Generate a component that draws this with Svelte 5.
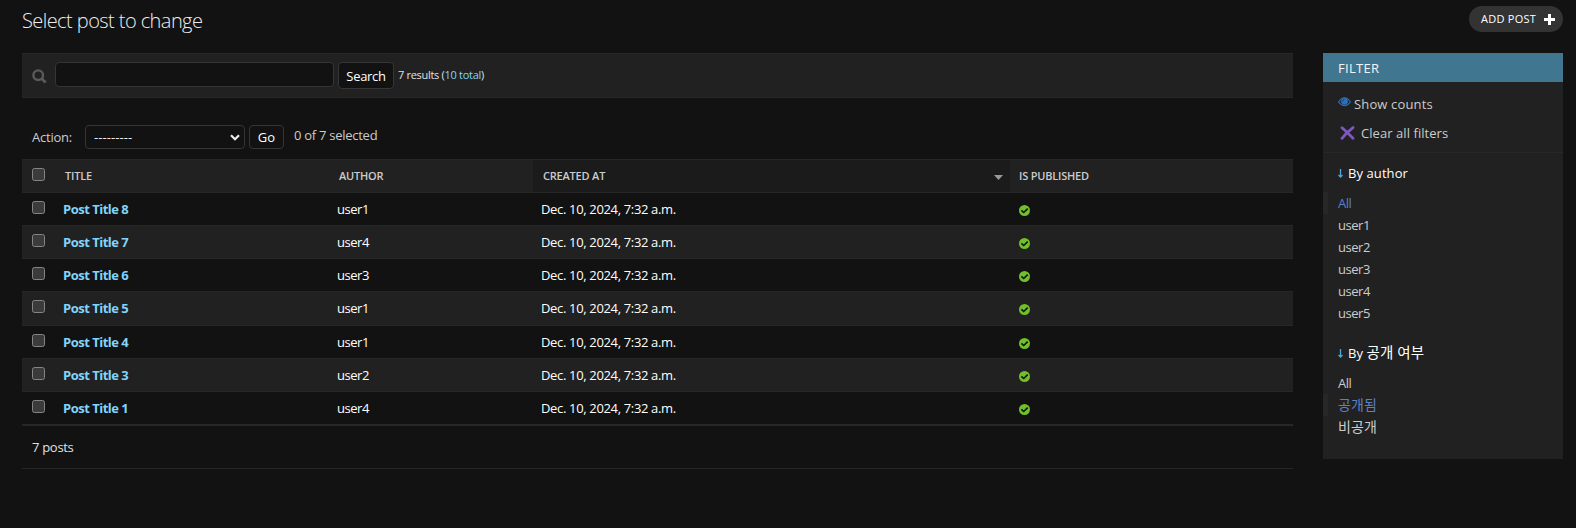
<script>
  const rows = [
    ['Post Title 8', 'user1'],
    ['Post Title 7', 'user4'],
    ['Post Title 6', 'user3'],
    ['Post Title 5', 'user1'],
    ['Post Title 4', 'user1'],
    ['Post Title 3', 'user2'],
    ['Post Title 1', 'user4'],
  ];
  const filters = [
    { name: 'author', items: ['All', 'user1', 'user2', 'user3', 'user4', 'user5'], selected: 0 },
    { name: '공개 여부', items: ['All', '공개됨', '비공개'], selected: 1 },
  ];
  const isKorean = (s) => /[가-힣]/.test(s);
</script>

<div class="page">
  <header>
    <h1>Select post to change</h1>
    <a class="add" href="#add"><span>Add post</span>
      <svg width="11" height="11" viewBox="0 0 11 11"><path d="M4 0h3v4h4v3H7v4H4V7H0V4h4z" fill="#fff" /></svg>
    </a>
  </header>
  <div class="content">
    <main>
      <div class="toolbar">
        <svg class="mag" width="15" height="15" viewBox="0 0 15 15"><circle cx="6.2" cy="6.2" r="4.800" fill="none" stroke="#5a5a5a" stroke-width="2.400" /><path d="M9.600 9.600l4 4" stroke="#5a5a5a" stroke-width="2.800" /></svg>
        <input class="q" type="text" aria-label="q" />
        <button class="search">Search</button>
        <span class="results">7 results (<a href="#all">10 total</a>)</span>
      </div>
      <div class="actions">
        <span class="label">Action:</span>
        <div class="select"><span>---------</span>
          <svg width="10" height="7" viewBox="0 0 10 7"><path d="M1 1.200l4 4 4-4" fill="none" stroke="#eee" stroke-width="2.200" /></svg>
        </div>
        <button class="go">Go</button>
        <span class="count">0 of 7 selected</span>
      </div>
      <div class="table">
        <div class="row head">
          <div class="check"><i></i></div>
          <div>Title</div>
          <div>Author</div>
          <div class="sorted">Created at
            <svg width="9" height="5" viewBox="0 0 9 5"><path d="M0 0h9L4.500 5z" fill="#999" /></svg>
          </div>
          <div class="published">Is published</div>
        </div>
        {#each rows as [title, author]}
          <div class="row body">
            <div class="check"><i></i></div>
            <div class="title"><a href="#post">{title}</a></div>
            <div class="user">{author}</div>
            <div class="date">Dec. 10, 2024, 7:32 a.m.</div>
            <div class="yes">
              <svg width="11" height="11" viewBox="0 0 11 11"><circle cx="5.500" cy="5.500" r="5.500" fill="#70bf2b" /><path d="M2.400 5.300l2.300 2.200 4-3.900" fill="none" stroke="#121212" stroke-width="1.600" /></svg>
            </div>
          </div>
        {/each}
      </div>
      <div class="paginator">7 posts</div>
    </main>
    <aside>
      <h2>Filter</h2>
      <div class="extra">
        <a class="show" href="#counts">
          <svg width="13" height="10" viewBox="0 0 13 10"><path d="M.5 5Q6.500-3.400 12.500 5Q6.500 12.400.5 5z" fill="none" stroke="#2b70bf" stroke-width="1.100" /><circle cx="6.500" cy="4.300" r="3.400" fill="#2b70bf" /><path d="M4.700 4.200a1.800 1.800 0 0 1 1.600-1.700" fill="none" stroke="#212121" stroke-width=".7" /></svg>
          <span>Show counts</span>
        </a>
        <a class="clear" href="#clear">
          <svg width="15" height="14" viewBox="0 0 15 14"><path d="M2 1.800Q7 6 13 12.300M13 1.600Q6.500 6.500 2 12.300" fill="none" stroke="#7e57c2" stroke-width="2.800" stroke-linecap="round" /></svg>
          <span>Clear all filters</span>
        </a>
      </div>
      {#each filters as f}
        <section>
          <h3>
            <svg width="5" height="9" viewBox="0 0 5 9"><path d="M2.500 0v8M.5 6l2 2 2-2" fill="none" stroke="#4ba8dc" stroke-width="1.300" /></svg>
            <span>By <span class:ko={isKorean(f.name)}>{f.name}</span></span>
          </h3>
          <ul>
            {#each f.items as item, i}
              <li class:selected={i === f.selected} class:ko={isKorean(item)}><a href="#filter">{item}</a></li>
            {/each}
          </ul>
        </section>
      {/each}
    </aside>
  </div>
</div>

<style>
  :global(body) { background: #121212; }
  * { box-sizing: border-box; }
  .page {
    height: 528px; overflow: hidden; padding: 0 13px 0 22px;
    background: #121212; color: #e0e0e0;
    font: 13px/18px 'Open Sans', 'Noto Sans', 'Noto Sans CJK KR', sans-serif;
  }
  a { color: inherit; text-decoration: none; }
  svg { display: block; flex: none; }
  h1, h2, h3, ul { margin: 0; padding: 0; font-weight: 400; list-style: none; }
  header { display: flex; justify-content: space-between; height: 53px; }
  h1 { font-size: 20px; line-height: 24px; font-weight: 300; padding-top: 9px; letter-spacing: -.57px; color: #eee; }
  .add {
    margin-top: 6px; width: 94px; height: 26px; border-radius: 13px; background: #333;
    display: flex; align-items: center; padding-left: 12px; gap: 7px; color: #fff;
    font-size: 11px; font-weight: 500; text-transform: uppercase; letter-spacing: .25px;
  }
  .add span { width: 56px; white-space: nowrap; }
  .content { display: flex; justify-content: space-between; align-items: flex-start; }
  main { width: 1271px; }
  .toolbar {
    height: 45px; background: #212121; border: solid #272727; border-width: 1px 0;
    display: flex; align-items: flex-start; padding: 8px 10px 0;
  }
  .mag { margin: 7px 8px 0 0; }
  .q { width: 279px; height: 25px; background: #121212; border: 1px solid #353535; border-radius: 4px; margin: 0 4px 0 0; }
  button {
    font: inherit; color: #fff; background: #121212; border: 1px solid #353535;
    border-radius: 4px; padding: 0; text-align: center;
  }
  .search { width: 56px; height: 27px; padding-top: 1px; letter-spacing: -.3px; }
  .results { margin: 4px 0 0 4px; font-size: 11px; letter-spacing: -.3px; }
  .results a { color: #81d4fa; }
  .actions { display: flex; align-items: flex-start; height: 61px; padding: 27px 10px 0; }
  .label { width: 53px; padding-top: 3px; letter-spacing: -.22px; color: #ccc; }
  .select {
    width: 160px; height: 24px; border: 1px solid #353535; border-radius: 4px; margin-right: 4px;
    display: flex; align-items: center; justify-content: space-between; padding: 0 4px 0 8px; color: #eee;
    letter-spacing: .08px;
  }
  .go { width: 35px; height: 24px; }
  .count { margin: 1px 0 0 10px; letter-spacing: -.27px; color: #ccc; }
  .row {
    display: grid; grid-template-columns: 33px 274px 204px 477px 1fr;
    border-bottom: 1px solid #272727;
  }
  .head {
    height: 34px; border-top: 1px solid #272727; background: #212121; color: #ccc;
    font-size: 11px; line-height: 32px; font-weight: 600; text-transform: uppercase; letter-spacing: -.2px;
  }
  .head > div { padding-left: 10px; }
  .head > .published { padding-left: 9px; }
  .sorted { background: #1b1b1b; display: flex; justify-content: space-between; align-items: center; padding-right: 7px; }
  .sorted svg { margin-top: 2px; }
  .body { height: 33.143px; line-height: 33px; color: #fff; }
  .body:nth-child(odd) { background: #212121; }
  .body > div { padding-left: 8px; }
  .row > .check { padding: 8px 0 0 10px; }
  .check i { display: block; width: 13px; height: 13px; border: 1px solid #858585; border-radius: 2.500px; background: #3b3b3b; }
  .title { color: #81d4fa; font-weight: 700; letter-spacing: -.5px; }
  .user { letter-spacing: -.45px; }
  .date { letter-spacing: -.34px; }
  .row > .yes { padding: 12px 0 0 9px; }
  .paginator { height: 44px; border: solid #272727; border-width: 1px 0; padding: 12px 10px 0; letter-spacing: -.3px; }
  aside { width: 240px; height: 406px; background: #212121; }
  h2 { height: 29px; line-height: 30px; padding-left: 15px; background: #417690; color: #f5f5f5; font-size: 13px; text-transform: uppercase; letter-spacing: .3px; }
  .extra { height: 71px; border-bottom: 1px solid #272727; padding: 13px 15px 0; color: #ccc; }
  .extra a { display: flex; height: 29px; line-height: 18px; }
  .show { letter-spacing: .15px; }
  .clear { letter-spacing: .06px; }
  .show svg { margin: 2px 3px 0 0; }
  .clear svg { margin: 2px 6px 0 2px; }
  section { height: 180px; }
  h3 { display: flex; align-items: center; gap: 5px; padding: 11px 15px 0; height: 29px; color: #fff; font-size: 13px; letter-spacing: .08px; }
  ul { padding-top: 10px; }
  li { height: 22px; line-height: 22px; padding-left: 15px; color: #ccc; letter-spacing: -.45px; }
  li.selected { color: #5b80c4; border-left: 5px solid #272727; padding-left: 10px; }
  .ko { font-size: 14px; letter-spacing: .1px; }
  h3 .ko { font-size: 14.500px; line-height: 18px; }
</style>
